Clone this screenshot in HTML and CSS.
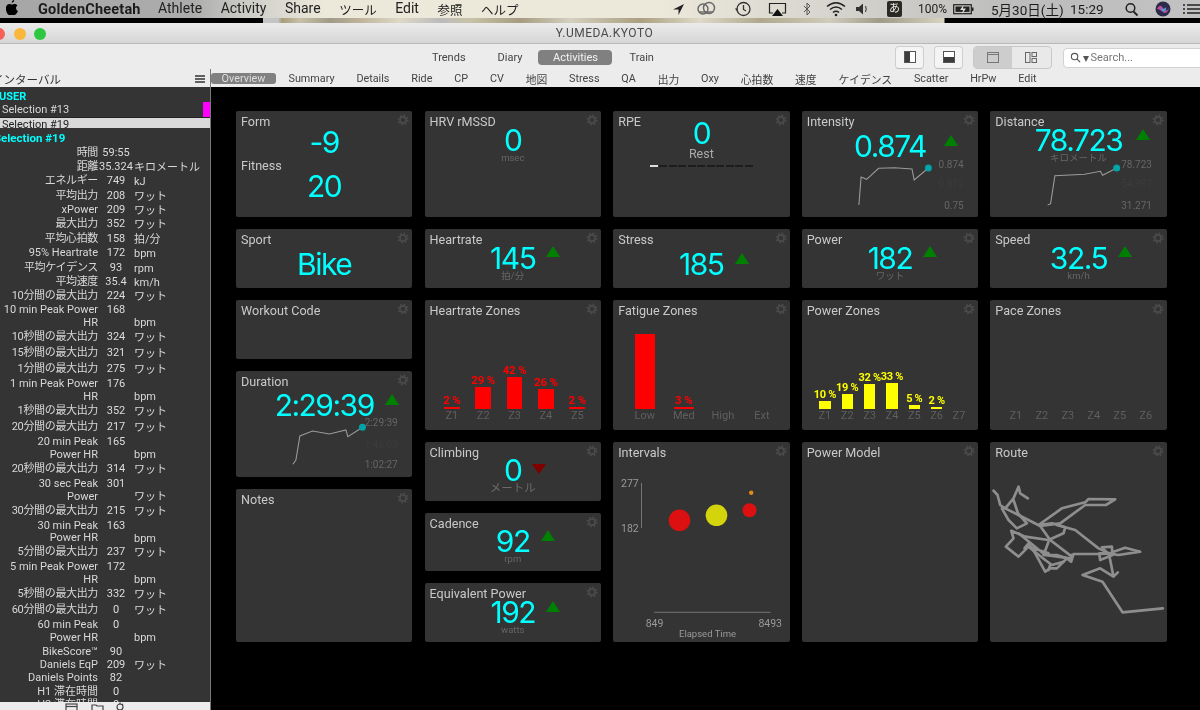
FILE: index.html
```html
<!DOCTYPE html>
<html lang="ja">
<head>
<meta charset="utf-8">
<title>GoldenCheetah</title>
<link rel="stylesheet" href="styles.css">
</head>
<body>
<svg class="defs" width="0" height="0" aria-hidden="true">
  <symbol id="gear" viewBox="0 0 12 12">
    <circle cx="6" cy="6" r="3.1" fill="none" stroke="#4b4b4b" stroke-width="1.6"/>
    <circle cx="6" cy="6" r="4.7" fill="none" stroke="#4b4b4b" stroke-width="1.6" stroke-dasharray="1.7 1.99"/>
  </symbol>
</svg>
<div class="screen">
  <header class="menubar">
    <svg class="apple" viewBox="0 0 12 15"><path d="M8.2 0c.1 1.2-1 2.7-2.5 2.7C5.600 1.400 6.900.1 8.200 0zM10 8c0-1.500 1.200-2.300 1.500-2.500-.9-1.200-2.200-1.400-2.700-1.400-1.200-.1-2.200.7-2.800.7-.6 0-1.500-.7-2.500-.7C2.200 4.100 1 4.900.4 6-.9 8.300.1 11.600 1.300 13.400c.6.9 1.300 1.900 2.300 1.600h5c1-.3 1.700-1 2.300-1.900.7-1 1-2 1-2.100-.1 0-1.900-.7-1.900-3z"/></svg>
    <strong class="app-name">GoldenCheetah</strong>
    <nav class="menus">
      <span>Athlete</span><span>Activity</span><span>Share</span><span class="cjk">ツール</span><span>Edit</span><span class="cjk">参照</span><span class="cjk">ヘルプ</span>
    </nav>
    <svg class="status-a" viewBox="672 0 213 18">
      <path d="M684 4 673 9.500h5.500V15z" fill="#222"/>
      <g fill="none" stroke="#666" stroke-width="1.400"><circle cx="703" cy="9" r="5"/><circle cx="709" cy="8" r="5.500"/><path d="M699 12h14"/></g>
      <g fill="none" stroke="#333" stroke-width="1.300"><circle cx="743.500" cy="9" r="6.500"/><path d="M743.500 5v4.500l2.500 1.500"/></g>
      <path d="M735 8.500l3 0-1.500 2.500z" fill="#333"/>
      <path d="M773 13h-3.500V3.500h16V13H782" fill="none" stroke="#222" stroke-width="1.200"/><path d="M777.500 9l5.500 7h-11z" fill="#111"/>
      <path d="M804 6l6 6-3 3V3l3 3-6 6" fill="none" stroke="#555" stroke-width="1"/>
      <g fill="none" stroke="#222" stroke-width="1.600"><path d="M827 6.500q9-7.500 18 0"/><path d="M830 9.500q6-5 12 0"/><path d="M833 12.500q3-2.500 6 0"/></g>
      <circle cx="836" cy="15" r="1.300" fill="#222"/>
      <path d="M856 7h3l4-3.500v11L859 11h-3z" fill="#333"/><path d="M865.500 6q1.500 3 0 6" fill="none" stroke="#333"/>
    </svg>
    <span class="ime">あ</span>
    <span class="pct-batt">100%</span>
    <svg class="battery" viewBox="0 0 21 12"><rect x=".7" y="1.700" width="17.600" height="9" fill="none" stroke="#222" stroke-width="1.200"/><rect x="2.500" y="3.500" width="14" height="5.400" fill="#222"/><rect x="19" y="4.500" width="1.500" height="3.500" fill="#222"/><path d="M10.500 2 7 7h3l-1 4 4-5.500h-3z" fill="#ddd"/></svg>
    <span class="clock">5月30日(土)</span>
    <span class="clock time">15:29</span>
    <svg class="status-b" viewBox="1125 0 75 18">
      <circle cx="1130.500" cy="8" r="4.300" fill="none" stroke="#222" stroke-width="1.500"/><path d="M1133.500 11.500l4 4" stroke="#222" stroke-width="1.800"/>
      <circle cx="1163" cy="9" r="7.500" fill="#2c2c4a"/><path d="M1157 9q3-6 6-1t6 0q-2 7-6 4t-6-3z" fill="#c0489c"/><path d="M1160 7q3 4 6 0 1 4-3 5z" fill="#4aa0d8"/>
      <g stroke="#222" stroke-width="1.500"><path d="M1187 5h13M1187 9h13M1187 13h13M1183 5h2M1183 9h2M1183 13h2"/></g>
    </svg>
  </header>
  <div class="strip"></div>
  <div class="window">
    <div class="titlebar">
      <i class="light red"></i><i class="light yellow"></i><i class="light green"></i>
      <span class="win-title">Y.UMEDA.KYOTO</span>
    </div>
    <div class="toolbar">
      <nav class="views">
        <span>Trends</span><span>Diary</span><span class="on">Activities</span><span>Train</span>
      </nav>
      <button class="tool first"><svg viewBox="0 0 12 12"><rect x=".5" y=".5" width="11" height="11" fill="#fff" stroke="#555"/><rect x="1" y="1" width="5" height="10" fill="#3c3c3c"/></svg></button>
      <button class="tool"><svg viewBox="0 0 12 12"><rect x=".5" y=".5" width="11" height="11" fill="#fff" stroke="#555"/><rect x="1" y="6" width="10" height="5" fill="#3c3c3c"/></svg></button>
      <div class="seg">
        <span class="seg-on"><svg viewBox="0 0 12 11"><rect x=".5" y=".5" width="11" height="10" fill="none" stroke="#777"/><path d="M0 2.500h12" stroke="#777"/></svg></span>
        <span><svg viewBox="0 0 12 11"><g fill="none" stroke="#666"><rect x=".5" y=".5" width="4.500" height="10"/><rect x="7" y=".5" width="4.500" height="4"/><rect x="7" y="6.500" width="4.500" height="4"/></g></svg></span>
      </div>
      <div class="search">
        <svg viewBox="0 0 12 12"><circle cx="5" cy="5" r="3.500" fill="none" stroke="#555" stroke-width="1.200"/><path d="M7.500 7.500 11 11" stroke="#555" stroke-width="1.400"/></svg>
        <i class="caret"></i>
        <span>Search...</span>
      </div>
    </div>
    <div class="main">
      <aside class="sidebar">
        <div class="side-head"><span>インターバル</span>
          <svg viewBox="0 0 10 8"><path d="M0 1h10M0 4h10M0 7h10" stroke="#333" stroke-width="1.300"/></svg>
        </div>
        <div class="side-body">
          <div class="group">USER</div>
          <div class="item"><span>Selection #13</span><i class="swatch"></i></div>
          <div class="item selected"><span>Selection #19</span></div>
          <div class="detail-title">Selection #19</div>
          <div class="stats">
            <div class="stat j"><span class="l">時間</span><span class="v">59:55</span><span class="u"></span></div>
            <div class="stat j"><span class="l">距離</span><span class="v">35.324</span><span class="u">キロメートル</span></div>
            <div class="stat j"><span class="l">エネルギー</span><span class="v">749</span><span class="u">kJ</span></div>
            <div class="stat j"><span class="l">平均出力</span><span class="v">208</span><span class="u">ワット</span></div>
            <div class="stat"><span class="l">xPower</span><span class="v">209</span><span class="u">ワット</span></div>
            <div class="stat j"><span class="l">最大出力</span><span class="v">352</span><span class="u">ワット</span></div>
            <div class="stat j"><span class="l">平均心拍数</span><span class="v">158</span><span class="u">拍/分</span></div>
            <div class="stat"><span class="l">95% Heartrate</span><span class="v">172</span><span class="u">bpm</span></div>
            <div class="stat j"><span class="l">平均ケイデンス</span><span class="v">93</span><span class="u">rpm</span></div>
            <div class="stat j"><span class="l">平均速度</span><span class="v">35.4</span><span class="u">km/h</span></div>
            <div class="stat rl j"><span class="l">10分間の最大出力</span><span class="v">224</span><span class="u">ワット</span></div>
            <div class="stat wrap"><span class="l">10 min Peak Power<br>HR</span><span class="v">168</span><span class="u">bpm</span></div>
            <div class="stat rw j"><span class="l">10秒間の最大出力</span><span class="v">324</span><span class="u">ワット</span></div>
            <div class="stat rw j"><span class="l">15秒間の最大出力</span><span class="v">321</span><span class="u">ワット</span></div>
            <div class="stat rw j"><span class="l">1分間の最大出力</span><span class="v">275</span><span class="u">ワット</span></div>
            <div class="stat wrap"><span class="l">1 min Peak Power<br>HR</span><span class="v">176</span><span class="u">bpm</span></div>
            <div class="stat rw j"><span class="l">1秒間の最大出力</span><span class="v">352</span><span class="u">ワット</span></div>
            <div class="stat rw j"><span class="l">20分間の最大出力</span><span class="v">217</span><span class="u">ワット</span></div>
            <div class="stat wrap"><span class="l">20 min Peak<br>Power HR</span><span class="v">165</span><span class="u">bpm</span></div>
            <div class="stat rw j"><span class="l">20秒間の最大出力</span><span class="v">314</span><span class="u">ワット</span></div>
            <div class="stat wrap"><span class="l">30 sec Peak<br>Power</span><span class="v">301</span><span class="u">ワット</span></div>
            <div class="stat rw j"><span class="l">30分間の最大出力</span><span class="v">215</span><span class="u">ワット</span></div>
            <div class="stat wrap"><span class="l">30 min Peak<br>Power HR</span><span class="v">163</span><span class="u">bpm</span></div>
            <div class="stat rw j"><span class="l">5分間の最大出力</span><span class="v">237</span><span class="u">ワット</span></div>
            <div class="stat wrap"><span class="l">5 min Peak Power<br>HR</span><span class="v">172</span><span class="u">bpm</span></div>
            <div class="stat rw j"><span class="l">5秒間の最大出力</span><span class="v">332</span><span class="u">ワット</span></div>
            <div class="stat rw j"><span class="l">60分間の最大出力</span><span class="v">0</span><span class="u">ワット</span></div>
            <div class="stat wrap"><span class="l">60 min Peak<br>Power HR</span><span class="v">0</span><span class="u">bpm</span></div>
            <div class="stat rs"><span class="l">BikeScore™</span><span class="v">90</span><span class="u"></span></div>
            <div class="stat rs"><span class="l">Daniels EqP</span><span class="v">209</span><span class="u">ワット</span></div>
            <div class="stat rs"><span class="l">Daniels Points</span><span class="v">82</span><span class="u"></span></div>
            <div class="stat rs"><span class="l">H1 滞在時間</span><span class="v">0</span><span class="u"></span></div>
            <div class="stat rs"><span class="l">H2 滞在時間</span><span class="v">0</span><span class="u"></span></div>
          </div>
        </div>
        <div class="side-foot">
          <svg viewBox="0 0 70 8"><g fill="none" stroke="#444" stroke-width="1.200"><rect x="1" y="2" width="11" height="9"/><path d="M1 4.500h11"/><path d="M27 8V3h4l1 1h6v4"/><circle cx="55" cy="5" r="3"/><path d="M55 .5v2M58 2l-1 1"/></g></svg>
        </div>
      </aside>
      <section class="content">
        <nav class="tabs">
          <span class="on">Overview</span><span>Summary</span><span>Details</span><span>Ride</span><span>CP</span><span>CV</span><span>地図</span><span>Stress</span><span>QA</span><span>出力</span><span>Oxy</span><span>心拍数</span><span>速度</span><span>ケイデンス</span><span>Scatter</span><span>HrPw</span><span>Edit</span>
        </nav>
        <div class="dash">
          <div class="col">
            <article class="card h106">
              <svg class="gear"><use href="#gear"/></svg>
              <h3>Form</h3><div class="val m-form">-9</div>
              <h3 class="fitness">Fitness</h3><div class="val m-fitness">20</div>
            </article>
            <article class="card h59">
              <svg class="gear"><use href="#gear"/></svg>
              <h3>Sport</h3><div class="val m-low">Bike</div>
            </article>
            <article class="card h59">
              <svg class="gear"><use href="#gear"/></svg>
              <h3>Workout Code</h3>
            </article>
            <article class="card h106">
              <svg class="gear"><use href="#gear"/></svg>
              <h3>Duration</h3>
              <div class="val m-duration"><span class="num">2:29:39<i class="up"></i></span></div>
              <svg class="spark sp-duration" viewBox="236 415 176 55">
                <polyline points="292.700,464.300 295.700,460 299.700,436 312.300,431 329.300,434 345.700,430 347.700,436.700 362.300,427.300"/>
                <circle cx="362.300" cy="427.300" r="3.500"/>
                <text x="397.500" y="426">2:29:39</text><text class="faint" x="397.500" y="448">1:46:03</text><text x="397.500" y="468">1:02:27</text>
              </svg>
            </article>
            <article class="card grow">
              <svg class="gear"><use href="#gear"/></svg>
              <h3>Notes</h3>
            </article>
          </div>
          <div class="col">
            <article class="card h106">
              <svg class="gear"><use href="#gear"/></svg>
              <h3>HRV rMSSD</h3><div class="val m-hrv">0</div><div class="unit">msec</div>
            </article>
            <article class="card h59">
              <svg class="gear"><use href="#gear"/></svg>
              <h3>Heartrate</h3><div class="val m-hi"><span class="num">145<i class="up"></i></span></div><div class="unit">拍/分</div>
            </article>
            <article class="card h130">
              <svg class="gear"><use href="#gear"/></svg>
              <h3>Heartrate Zones</h3>
              <div class="zones z-hr red-z">
                <div class="zone"><b>2 %</b><i style="height:2px"></i><span>Z1</span></div>
                <div class="zone"><b>29 %</b><i style="height:22px"></i><span>Z2</span></div>
                <div class="zone"><b>42 %</b><i style="height:32px"></i><span>Z3</span></div>
                <div class="zone"><b>26 %</b><i style="height:20px"></i><span>Z4</span></div>
                <div class="zone"><b>2 %</b><i style="height:2px"></i><span>Z5</span></div>
              </div>
            </article>
            <article class="card grow">
              <svg class="gear"><use href="#gear"/></svg>
              <h3>Climbing</h3><div class="val m-hrv0"><span class="num">0<i class="down"></i></span></div><div class="unit big">メートル</div>
            </article>
            <article class="card grow">
              <svg class="gear"><use href="#gear"/></svg>
              <h3>Cadence</h3><div class="val m-hi"><span class="num">92<i class="up"></i></span></div><div class="unit">rpm</div>
            </article>
            <article class="card grow">
              <svg class="gear"><use href="#gear"/></svg>
              <h3>Equivalent Power</h3><div class="val m-hi"><span class="num">192<i class="up"></i></span></div><div class="unit">watts</div>
            </article>
          </div>
          <div class="col">
            <article class="card h106">
              <svg class="gear"><use href="#gear"/></svg>
              <h3>RPE</h3><div class="val m-rpe">0</div><div class="rest">Rest</div>
              <div class="rpe"><i class="lit"></i><i></i><i></i><i></i><i></i><i></i><i></i><i></i><i></i><i></i><i></i></div>
            </article>
            <article class="card h59">
              <svg class="gear"><use href="#gear"/></svg>
              <h3>Stress</h3><div class="val m-low"><span class="num">185<i class="up"></i></span></div>
            </article>
            <article class="card h130">
              <svg class="gear"><use href="#gear"/></svg>
              <h3>Fatigue Zones</h3>
              <div class="zones z-fatigue red-z">
                <div class="zone"><i style="height:75px"></i><span>Low</span></div>
                <div class="zone"><b>3 %</b><i style="height:2px"></i><span>Med</span></div>
                <div class="zone"><span>High</span></div>
                <div class="zone"><span>Ext</span></div>
              </div>
            </article>
            <article class="card grow">
              <svg class="gear"><use href="#gear"/></svg>
              <h3>Intervals</h3>
              <svg class="plot" viewBox="614 462 176 180">
                <path d="M642.300 483v45" stroke="#777"/><path d="M655 612.300h116.300" stroke="#666" stroke-width="1.200"/>
                <circle cx="680.300" cy="520.300" r="10.800" fill="#dc1010"/>
                <circle cx="717.300" cy="515.300" r="10.800" fill="#d4d40c"/>
                <circle cx="750.300" cy="510.300" r="7" fill="#dc1010"/>
                <circle cx="752" cy="492.700" r="2.200" fill="#e08a1a"/>
                <text class="end" x="639.500" y="487">277</text><text class="end" x="639.500" y="532">182</text>
                <text class="mid" x="655.300" y="627">849</text><text class="mid" x="771" y="627">8493</text>
                <text class="mid small" x="708.300" y="637">Elapsed Time</text>
              </svg>
            </article>
          </div>
          <div class="col">
            <article class="card h106">
              <svg class="gear"><use href="#gear"/></svg>
              <h3>Intensity</h3>
              <div class="val m-intensity"><span class="num">0.874<i class="up far"></i></span></div>
              <svg class="spark sp-intensity" viewBox="802 160 176 52">
                <polyline points="858.700,205 860.900,177 866.400,179.300 878.400,168.300 894.400,167.700 911.800,169 914,180 928.200,168"/>
                <circle cx="928.200" cy="168" r="3.500"/>
                <text x="963.500" y="167.500">0.874</text><text class="faint" x="963.500" y="187">0.812</text><text x="963.500" y="209">0.75</text>
              </svg>
            </article>
            <article class="card h59">
              <svg class="gear"><use href="#gear"/></svg>
              <h3>Power</h3><div class="val m-hi"><span class="num">182<i class="up"></i></span></div><div class="unit">ワット</div>
            </article>
            <article class="card h130">
              <svg class="gear"><use href="#gear"/></svg>
              <h3>Power Zones</h3>
              <div class="zones z-power">
                <div class="zone"><b>10 %</b><i style="height:8px"></i><span>Z1</span></div>
                <div class="zone"><b>19 %</b><i style="height:15px"></i><span>Z2</span></div>
                <div class="zone"><b>32 %</b><i style="height:25px"></i><span>Z3</span></div>
                <div class="zone"><b>33 %</b><i style="height:26px"></i><span>Z4</span></div>
                <div class="zone"><b>5 %</b><i style="height:4px"></i><span>Z5</span></div>
                <div class="zone"><b>2 %</b><i style="height:2px"></i><span>Z6</span></div>
                <div class="zone"><span>Z7</span></div>
              </div>
            </article>
            <article class="card grow">
              <svg class="gear"><use href="#gear"/></svg>
              <h3>Power Model</h3>
            </article>
          </div>
          <div class="col">
            <article class="card h106">
              <svg class="gear"><use href="#gear"/></svg>
              <h3>Distance</h3>
              <div class="val m-hrv"><span class="num">78.723<i class="up mid"></i></span></div><div class="unit">キロメートル</div>
              <svg class="spark sp-distance" viewBox="990 160 176 52">
                <polyline points="1047.500,205 1050.400,203.700 1054.700,175.700 1084.500,174.300 1100.200,171.300 1102.400,175.300 1116.500,168"/>
                <circle cx="1116.500" cy="168" r="3.500"/>
                <text x="1151.800" y="167.500">78.723</text><text class="faint" x="1151.800" y="187">54.997</text><text x="1151.800" y="209">31.271</text>
              </svg>
            </article>
            <article class="card h59">
              <svg class="gear"><use href="#gear"/></svg>
              <h3>Speed</h3><div class="val m-hi"><span class="num">32.5<i class="up"></i></span></div><div class="unit">km/h</div>
            </article>
            <article class="card h130">
              <svg class="gear"><use href="#gear"/></svg>
              <h3>Pace Zones</h3>
              <div class="zones z-pace">
                <div class="zone"><span>Z1</span></div><div class="zone"><span>Z2</span></div><div class="zone"><span>Z3</span></div><div class="zone"><span>Z4</span></div><div class="zone"><span>Z5</span></div><div class="zone"><span>Z6</span></div>
              </div>
            </article>
            <article class="card grow">
              <svg class="gear"><use href="#gear"/></svg>
              <h3>Route</h3>
              <svg class="route" viewBox="15 66 528 540">
                <path d="M533 505 412 517 352 425 292 405 345 385 385 410 398 397 385 410 378 375 372 345 350 322 380 320 382 345 345 360 342 340 372 340 420 323 465 335 400 345 370 340 345 342 265 342 258 365 245 355 215 345 175 345 190 305"/>
                <path d="M245 355 215 385 195 385 180 395 150 340 130 310 118 325 130 320 100 350 62 320 85 295 78 272 120 290 190 300 235 280 240 262 200 250 160 255 230 205 300 187 310 177 390 178 362 195 300 195 225 250 165 258 100 225 60 205 45 195 37 165 25 152"/>
                <path d="M60 205 85 175 100 140 105 160 128 175M100 225 85 180M50 205 70 240 95 265 125 250 100 222M100 280 180 345 255 355 260 345M215 255 270 270 340 325 372 340M165 258 195 300 260 350M190 340 130 320 180 360 200 375 235 365M195 375 190 390"/>
              </svg>
            </article>
          </div>
        </div>
      </section>
    </div>
  </div>
</div>
</body>
</html>
```
FILE: styles.css
```css
* { box-sizing: border-box; }
html, body { margin: 0; height: 100%; background: #000; overflow: hidden; }
body { font-family: Roboto, "Noto Sans CJK JP", sans-serif; }
.defs { position: absolute; }
.screen { width: 1200px; height: 710px; display: flex; flex-direction: column; overflow: hidden; filter: blur(.4px); }

/* macOS menu bar */
.menubar {
  height: 18px; flex: none; display: flex; align-items: center; padding-left: 6px;
  font-size: 13.500px; color: #1c1c1c;
  background: linear-gradient(90deg, #a6a6a6 0, #acacac 16%, #cfcfca 21%, #ece8da 27%, #ece8da 55%, #d8d6cf 68%, #bcbcbc 85%, #c2c2c2 100%);
}
.apple { width: 12px; height: 15px; flex: none; margin-top: -3px; }
.app-name { margin-left: 20px; width: 102px; font-size: 14.500px; font-weight: 700; white-space: nowrap; letter-spacing: .2px; }
.menus { display: flex; gap: 18.500px; margin-left: 18px; color: #222; white-space: nowrap; width: 514px; font-size: 14px; flex: none; }
.menus .cjk { font-size: 12.500px; }
.status-a { width: 213px; height: 18px; flex: none; }
.ime { width: 15px; height: 16px; margin-left: 2px; background: #2a2a22; color: #eee; border-radius: 2px; font-size: 11px; line-height: 16px; text-align: center; flex: none; }
.pct-batt { margin-left: 16px; font-size: 12px; width: 30px; flex: none; }
.battery { width: 21px; height: 12px; margin-left: 5px; flex: none; }
.clock { margin-left: 17px; width: 71px; font-size: 13.500px; white-space: nowrap; flex: none; }
.clock.time { margin-left: 8px; width: 35px; }
.status-b { width: 75px; height: 18px; margin-left: 20px; flex: none; }

.strip {
  height: 5px; flex: none;
  background: linear-gradient(90deg, #000 0, #000 263px, #c4c4c4 263px, #c4c4c4 278px, #a89c7c 282px, #c8c0a8 300px, #a09a88 330px, #bdb49a 360px, #ded8c6 400px, #bbb 440px, #c8c2a8 470px, #a59c80 520px, #d4d0c0 570px, #aaa080 640px, #ded9c8 700px, #b0a88e 760px, #d0ccbb 830px, #a09a88 880px, #d8d4c0 944px, #000 945px, #000 100%);
}

.window { flex: 1; min-height: 0; display: flex; flex-direction: column; background: #ececec; }
.titlebar {
  height: 21px; flex: none; display: flex; align-items: center; justify-content: center; position: relative;
  background: linear-gradient(#ebebeb, #d6d6d6); border-bottom: 1px solid #b9b9b9;
}
.light { position: absolute; top: 4.500px; width: 12px; height: 12px; border-radius: 50%; }
.light.red { left: -7px; background: #f8605a; }
.light.yellow { left: 14px; background: #fbb63c; }
.light.green { left: 33.500px; background: #2ec742; }
.win-title { font-size: 12px; color: #4a4a4a; letter-spacing: .5px; margin-left: 9px; }

.toolbar { height: 25px; flex: none; display: flex; align-items: flex-start; padding-top: 1.500px; font-size: 11px; color: #444; }
.views { display: flex; align-items: center; height: 16px; margin-top: 4px; margin-left: 432px; width: 463px; flex: none; }
.views span { margin-right: 32px; white-space: nowrap; }
.views .on { background: #808080; color: #f2f2f2; border-radius: 4px; width: 74px; text-align: center; line-height: 15px; margin-right: 17px; margin-left: -16px; }
.tool { width: 29px; height: 23px; padding: 0; margin: 0 10px 0 0; flex: none; border: 1px solid #cfcfcf; border-bottom-color: #bdbdbd; border-radius: 4px; background: #f4f4f4; display: flex; align-items: center; justify-content: center; }
.tool svg { width: 12px; height: 12px; }
.seg { width: 78.500px; height: 23px; flex: none; display: flex; border: 1px solid #c8c8c8; border-radius: 4px; overflow: hidden; background: #e9e9e9; }
.seg span { flex: 1; display: flex; align-items: center; justify-content: center; }
.seg .seg-on { background: #cdcdcd; }
.seg svg { width: 12px; height: 11px; }
.search { margin: 2px 0 0 11.500px; width: 150px; height: 20px; flex: none; background: #fff; border: 1px solid #d2d2d2; border-radius: 4px; display: flex; align-items: center; padding-left: 6px; color: #777; font-size: 11px; }
.search svg { width: 11px; height: 11px; }
.caret { width: 0; height: 0; margin: 2px 1.500px 0 2px; border: 3.500px solid transparent; border-top: 6px solid #555; border-bottom: 0; }

.main { flex: 1; min-height: 0; display: flex; }
.sidebar { width: 211px; flex: none; display: flex; flex-direction: column; border-right: 1px solid #777; background: #343434; }
.side-head { height: 18px; flex: none; background: #ececec; display: flex; align-items: center; justify-content: space-between; padding: 1px 5px 0 0; color: #333; font-size: 11.500px; }
.side-head span { margin-left: -8px; white-space: nowrap; }
.side-head svg { width: 10px; height: 8px; }
.side-body { flex: 1; min-height: 0; overflow: hidden; color: #d8d8d8; font-size: 11px; line-height: 13px; }
.group { height: 15px; line-height: 19px; margin-left: -1px; font-weight: 700; color: #00ffff; }
.item { height: 15px; line-height: 16px; display: flex; justify-content: space-between; padding-left: 2px; }
.swatch { width: 7px; background: #ff00ff; }
.item.selected { height: 11px; background: #d9d9d9; color: #222; border-top: 1px solid #222; line-height: 14px; overflow: hidden; }
.detail-title { height: 16px; line-height: 19px; margin-left: -6px; margin-top: 1px; font-weight: 700; color: #00ffff; white-space: nowrap; font-size: 11.500px; }
.stats { margin-top: .500px; }
.stat { display: grid; grid-template-columns: 98px 36px 1fr; height: 14.400px; }
.stat.rl { height: 15px; }
.stat.rw { height: 16.200px; }
.stat.wrap { height: 25.500px; line-height: 12.700px; }
.stat.rs { height: 13.300px; }
.l { text-align: right; white-space: nowrap; }
.j .l { letter-spacing: -.35px; }
.v { text-align: center; white-space: nowrap; color: #dcdcdc; }
.u { white-space: nowrap; padding-top: 1px; }
.wrap .u { align-self: end; }
.side-foot { height: 8px; flex: none; background: #ececec; overflow: hidden; padding-left: 65px; display: flex; }
.side-foot svg { width: 70px; height: 8px; }

.content { flex: 1; min-width: 0; display: flex; flex-direction: column; }
.tabs { height: 18px; flex: none; display: flex; align-items: center; gap: 21.850px; font-size: 10.800px; color: #444; white-space: nowrap; padding-top: 1px; background: #ececec; }
.tabs .on { width: 65px; line-height: 11px; height: 11px; margin-right: -9.350px; margin-top: -1px; background: #808080; color: #dedede; border-radius: 3px; text-align: center; }
.dash { flex: 1; min-height: 0; background: #000; padding: 24px 0 68px 25px; display: flex; gap: 12.200px; }
.col { width: 176.400px; flex: none; display: flex; flex-direction: column; gap: 12px; }

.card { position: relative; background: #343434; border-radius: 2px; padding-top: 3px; display: flex; flex-direction: column; text-align: center; overflow: hidden; }
.h106 { height: 106px; }
.h59 { height: 59px; }
.h130 { height: 130px; }
.grow { flex: 1; min-height: 0; }
.gear { position: absolute; top: 3px; right: 3px; width: 12px; height: 12px; }
.card h3 { height: 0; margin: 0; padding-left: 5px; font-size: 12.600px; font-weight: 400; line-height: 16px; color: #c9c9c9; text-align: left; white-space: nowrap; }
.val { font-family: Inter, Roboto, sans-serif; font-size: 30px; line-height: 30px; color: #00ffff; letter-spacing: -1.500px; white-space: nowrap; }
.num { position: relative; display: inline-block; }
.m-form { margin-top: 12.700px; }
.card h3.fitness { margin-top: 1px; }
.m-fitness { margin-top: 13px; }
.m-hrv { margin-top: 11px; }
.m-hrv0 { margin-top: 10px; }
.m-hi { margin-top: 10.700px; }
.m-low { margin-top: 17px; }
.m-rpe { margin-top: 4px; }
.m-duration { margin-top: 16px; }
.m-intensity { margin-top: 16.700px; }
.up, .down { position: absolute; left: 100%; margin-left: 11px; top: 3.500px; width: 0; height: 0; border-left: 7px solid transparent; border-right: 7px solid transparent; }
.up { border-bottom: 11px solid #008000; }
.down { border-top: 10px solid #800000; top: 9px; }
.up.far { margin-left: 18px; top: 4px; }
.up.mid { margin-left: 14px; }
.unit { font-size: 9.500px; line-height: 12px; margin-top: -3px; color: #666; }
.unit.big { font-size: 11.500px; color: #6a6a6a; }
.rest { font-size: 12.500px; line-height: 14px; color: #ababab; margin-top: -1px; }
.rpe { display: flex; justify-content: center; gap: 1.500px; margin-top: 4px; }
.rpe i { width: 8px; height: 2px; background: #1c1c1c; }
.rpe .lit { background: #dedede; }

.spark { display: block; width: 100%; flex: none; }
.sp-intensity, .sp-distance { height: 52px; }
.sp-intensity { margin-top: -1px; }
.sp-distance { margin-top: -4px; }
.sp-duration { height: 55px; margin-top: -5px; }
.spark polyline { fill: none; stroke: #9a9a9a; stroke-width: 1.100; }
.spark circle { fill: #00a3a8; }
.spark text { font-size: 10px; fill: #666; text-anchor: end; font-family: Roboto, sans-serif; }
.spark .faint { fill: #3c3c3c; }

.zones { display: flex; margin-top: auto; margin-bottom: 8px; }
.zone { flex: 1; min-width: 0; display: flex; flex-direction: column; align-items: center; justify-content: flex-end; }
.zone b { font-size: 11.500px; line-height: 13px; font-weight: 700; white-space: nowrap; letter-spacing: -.2px; }
.zone i { display: block; background: currentColor; }
.zone span { font-size: 11px; line-height: 13px; color: #5f5f5f; }
.z-hr { margin-left: 11.600px; margin-right: 8px; }
.z-hr i { width: 15.700px; }
.z-fatigue { margin-left: 12px; margin-right: 8px; }
.z-fatigue i { width: 19.600px; }
.red-z { color: #ff0000; }
.z-power { margin-left: 12px; margin-right: 8px; color: #ffff00; }
.z-power i { width: 11.300px; }
.z-power b { font-size: 11px; letter-spacing: -.3px; }
.z-pace { margin-left: 12.500px; margin-right: 8px; }

.plot { display: block; width: 100%; height: 180px; margin-top: 17px; flex: none; }
.plot text { font-size: 10.500px; fill: #9a9a9a; font-family: Roboto, sans-serif; }
.plot .end { text-anchor: end; }
.plot .mid { text-anchor: middle; }
.plot .small { font-size: 9.500px; }
.route { display: block; width: 100%; height: 180px; margin-top: 17px; flex: none; fill: none; }
.route path { fill: none; stroke: #8e8e8e; stroke-width: 8; stroke-linejoin: round; stroke-linecap: round; }
```
